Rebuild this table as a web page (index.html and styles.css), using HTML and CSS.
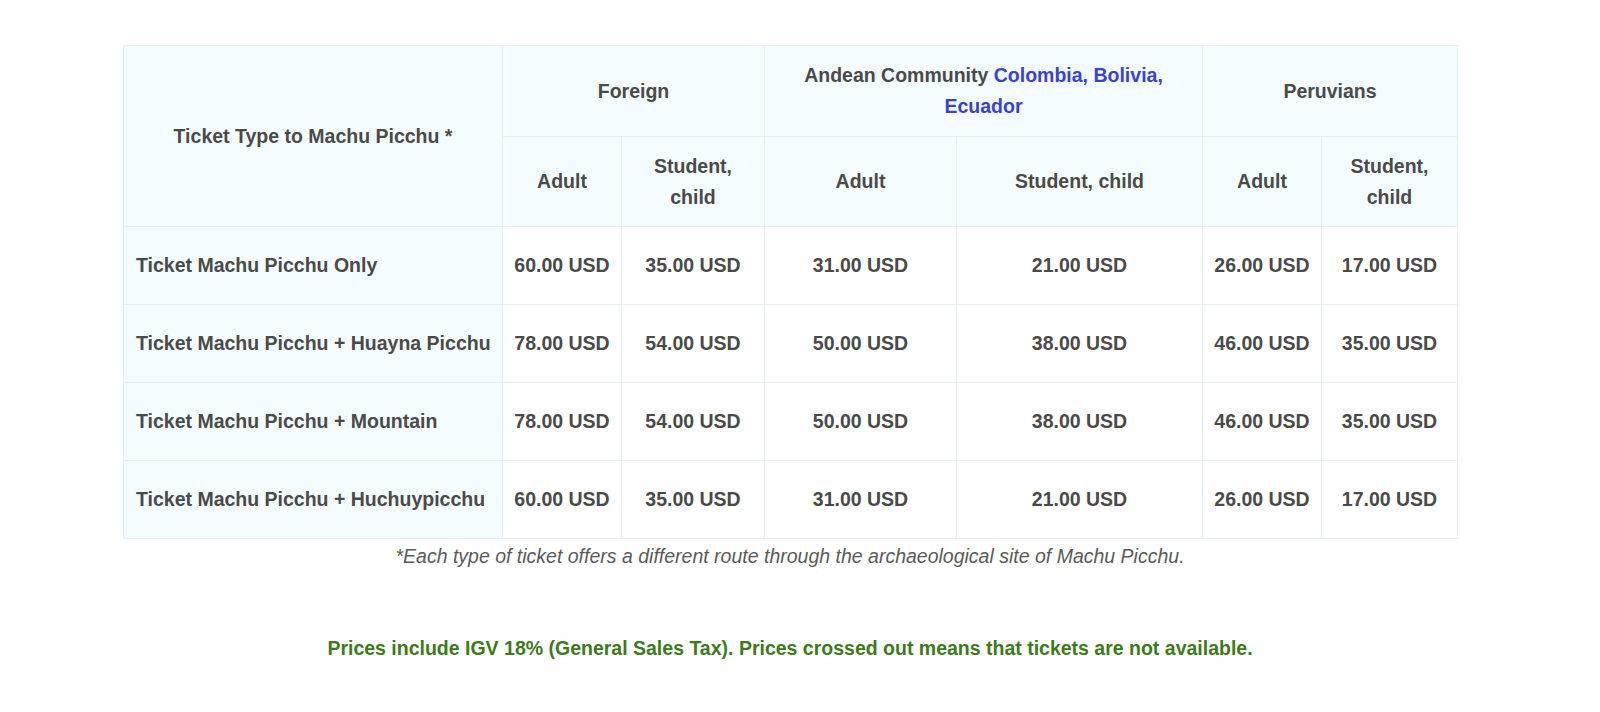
FILE: index.html
```html
<!DOCTYPE html>
<html lang="en">
<head>
<meta charset="utf-8">
<title>Machu Picchu Ticket Prices</title>
<link rel="stylesheet" href="styles.css">
</head>
<body>
<main class="page">
  <section class="prices">
    <table class="ticket-table">
      <colgroup>
        <col class="c-type">
        <col class="c-fa">
        <col class="c-fs">
        <col class="c-aa">
        <col class="c-as">
        <col class="c-pa">
        <col class="c-ps">
      </colgroup>
      <thead>
        <tr class="head-top">
          <th rowspan="2" class="type-head">Ticket Type to Machu Picchu *</th>
          <th colspan="2">Foreign</th>
          <th colspan="2" class="andean">Andean Community <span class="countries">Colombia, Bolivia,</span> <span class="countries">Ecuador</span></th>
          <th colspan="2">Peruvians</th>
        </tr>
        <tr class="head-sub">
          <th>Adult</th>
          <th>Student, child</th>
          <th>Adult</th>
          <th>Student, child</th>
          <th>Adult</th>
          <th>Student, child</th>
        </tr>
      </thead>
      <tbody>
        <tr>
          <th class="row-name">Ticket Machu Picchu Only</th>
          <td>60.00 USD</td><td>35.00 USD</td><td>31.00 USD</td><td>21.00 USD</td><td>26.00 USD</td><td>17.00 USD</td>
        </tr>
        <tr>
          <th class="row-name">Ticket Machu Picchu + Huayna Picchu</th>
          <td>78.00 USD</td><td>54.00 USD</td><td>50.00 USD</td><td>38.00 USD</td><td>46.00 USD</td><td>35.00 USD</td>
        </tr>
        <tr>
          <th class="row-name">Ticket Machu Picchu + Mountain</th>
          <td>78.00 USD</td><td>54.00 USD</td><td>50.00 USD</td><td>38.00 USD</td><td>46.00 USD</td><td>35.00 USD</td>
        </tr>
        <tr>
          <th class="row-name">Ticket Machu Picchu + Huchuypicchu</th>
          <td>60.00 USD</td><td>35.00 USD</td><td>31.00 USD</td><td>21.00 USD</td><td>26.00 USD</td><td>17.00 USD</td>
        </tr>
      </tbody>
    </table>
    <p class="caption">*Each type of ticket offers a different route through the archaeological site of Machu Picchu.</p>
    <p class="tax-note">Prices include IGV 18% (General Sales Tax). Prices crossed out means that tickets are not available.</p>
  </section>
</main>
</body>
</html>
```

FILE: styles.css
```css
html, body {
  margin: 0;
  padding: 0;
  background: #ffffff;
}

body {
  font-family: "Liberation Sans", Arial, Helvetica, sans-serif;
  color: #4a4a4a;
}

.page {
  padding: 45px 0 0 123px;
}

.prices {
  width: 1334px;
}

.ticket-table {
  width: 1334px;
  border-collapse: collapse;
  table-layout: fixed;
  font-size: 19.5px;
  line-height: 30.6px;
  font-weight: bold;
}

.c-type { width: 379px; }
.c-fa { width: 119px; }
.c-fs { width: 143px; }
.c-aa { width: 192px; }
.c-as { width: 246px; }
.c-pa { width: 119px; }
.c-ps { width: 136px; }

.ticket-table th,
.ticket-table td {
  border: 1px solid #e3eef5;
  padding: 0 12px;
  text-align: center;
  vertical-align: middle;
  color: #4a4a4a;
}

.ticket-table thead th {
  background: #f4fbfd;
}

.head-top th {
  height: 90px;
}

.head-sub th {
  height: 89px;
}

.countries {
  color: #3b41d6;
}

.ticket-table tbody tr {
  height: 78px;
}

.ticket-table th.row-name {
  background: #f4fbfd;
  text-align: left;
  white-space: nowrap;
}

.ticket-table td {
  background: #ffffff;
  padding: 0 6px;
  white-space: nowrap;
}

.caption {
  margin: 2px 0 0;
  text-align: center;
  font-style: italic;
  font-size: 19.5px;
  line-height: 30px;
  color: #5a5a5a;
}

.tax-note {
  margin: 62px 0 0;
  text-align: center;
  font-weight: bold;
  font-size: 19.5px;
  line-height: 30px;
  color: #3d7a1c;
}
```
